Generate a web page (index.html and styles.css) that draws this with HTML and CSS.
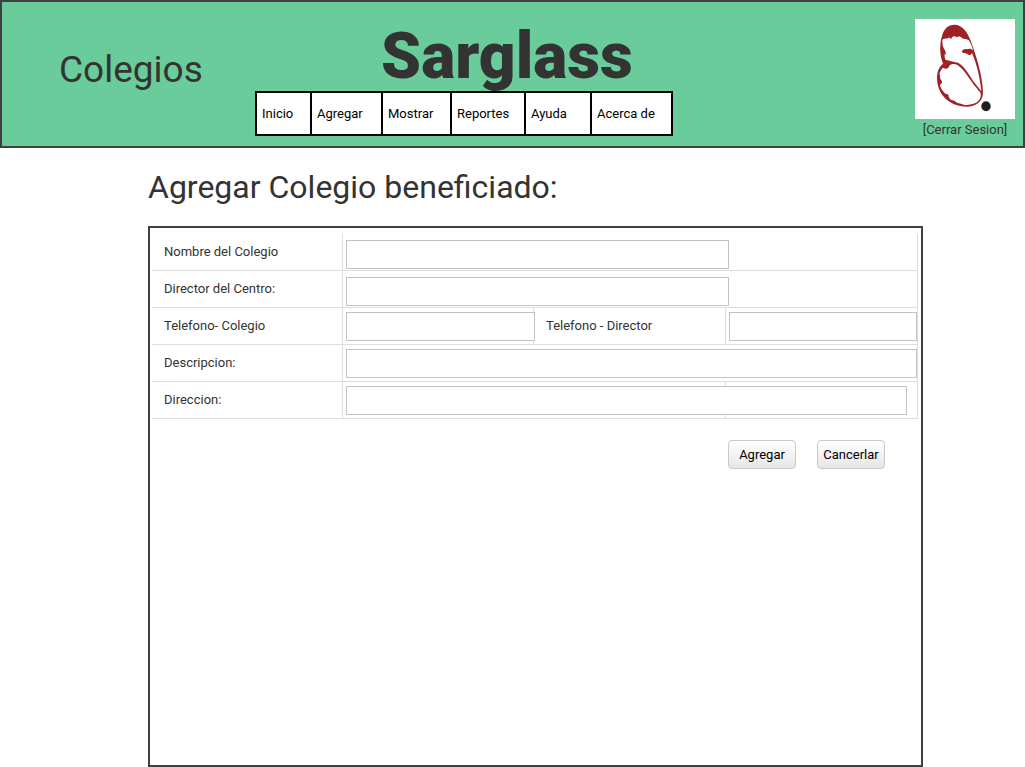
FILE: index.html
```
<!DOCTYPE html>
<html lang="es">
<head>
<meta charset="utf-8">
<meta name="viewport" content="width=device-width, initial-scale=1">
<title>Sarglass - Colegios</title>
<link rel="stylesheet" href="styles.css">
</head>
<body>
<header class="header">
  <h2 class="section-name">Colegios</h2>
  <div class="brand">
    <h1 class="brand-name">Sarglass</h1>
    <nav class="menu">
      <a class="menu-item" href="#">Inicio</a>
      <a class="menu-item" href="#">Agregar</a>
      <a class="menu-item" href="#">Mostrar</a>
      <a class="menu-item" href="#">Reportes</a>
      <a class="menu-item" href="#">Ayuda</a>
      <a class="menu-item" href="#">Acerca de</a>
    </nav>
  </div>
  <div class="session">
    <svg class="logo" viewBox="0 0 300 300" role="img" aria-label="Sarglass">
      <rect width="300" height="300" fill="#fff"/>
      <path fill="#9e2127" fill-rule="evenodd" d="M118 17C141 17 157 37 168 68C184 111 203 171 204 221C203 248 184 262 153 263C116 262 83 242 71 207C61 173 67 147 84 134C73 107 73 69 84 42C91 25 103 17 118 17Z
      M82 65C83 59 89 57 96 59C100 54 106 57 109 61C109 52 119 49 125 55C131 51 138 53 141 58C148 61 155 60 161 63C168 74 172 83 174 94C167 88 161 89 157 91C149 88 143 92 140 98C146 104 154 102 157 105C161 110 168 109 171 102C184 131 196 178 199 217L175 187C161 164 148 144 134 134C128 129 117 130 108 127C99 123 92 125 91 121C88 116 90 111 88 108C95 106 92 99 90 94C85 87 81 75 82 65Z
      M103 140C107 136 112 134 118 135C135 137 151 161 168 185C178 199 188 211 197 222C200 242 187 256 155 258C142 258 138 253 128 252C120 249 119 244 112 244C106 243 104 239 102 235C99 232 104 228 97 226C91 225 88 221 84 216C79 209 75 203 75 197C81 195 83 189 79 184C73 178 77 168 73 164C76 155 80 148 85 146C91 151 101 150 103 140Z"/>
      <ellipse cx="213" cy="262" rx="14" ry="15" fill="#231f20"/>
    </svg>
    <a class="logout" href="#">[Cerrar Sesion]</a>
  </div>
</header>
<main class="main">
  <h2 class="page-title">Agregar Colegio beneficiado:</h2>
  <form class="panel">
    <div class="fields">
      <label class="cell" for="nombre">Nombre del Colegio</label>
      <div class="cell control upper wide"><input class="input two-thirds" id="nombre" type="text"></div>

      <label class="cell" for="director">Director del Centro:</label>
      <div class="cell control upper wide"><input class="input two-thirds" id="director" type="text"></div>

      <label class="cell" for="tel-colegio">Telefono- Colegio</label>
      <div class="cell control"><input class="input overlap" id="tel-colegio" type="text"></div>
      <label class="cell" for="tel-director">Telefono - Director</label>
      <div class="cell control"><input class="input" id="tel-director" type="text"></div>

      <label class="cell" for="descripcion">Descripcion:</label>
      <div class="cell control wide"><input class="input" id="descripcion" type="text"></div>

      <label class="cell" for="direccion">Direccion:</label>
      <div class="cell control double"><input class="input address" id="direccion" type="text"></div>
      <div class="cell"></div>
    </div>
    <div class="actions">
      <button class="button" type="submit">Agregar</button>
      <button class="button" type="button">Cancerlar</button>
    </div>
  </form>
</main>
</body>
</html>
```
FILE: styles.css
```
* { box-sizing: border-box; }

body {
  margin: 0;
  min-height: 100vh;
  display: flex;
  flex-direction: column;
  background: #fff;
  color: #333;
  font: 13px/20px Roboto, sans-serif;
}

h1, h2 { margin: 0; }

.header {
  display: flex;
  align-items: flex-start;
  min-height: 148px;
  padding: 0 8px 0 57px;
  border: 2px solid #404040;
  background: #6acc9a;
}

.section-name {
  flex: 0 0 196px;
  padding-top: 44px;
  font-size: 37px;
  font-weight: 400;
  line-height: 48px;
}

.brand {
  display: flex;
  flex-direction: column;
}

.brand-name {
  padding: 23px 0 2px 86px;
  text-align: center;
  font-size: 64px;
  font-weight: 900;
  line-height: 64px;
}

.menu {
  display: grid;
  grid-template-columns: 55px 71px 69px 74px 66px 79px;
  position: relative;
  border: 2px solid #000;
  background: #fff;
}

.menu-item {
  padding: 10px 0 10px 5px;
  border-right: 2px solid #000;
  color: #000;
  line-height: 21px;
  text-decoration: none;
}

.menu-item:last-child { border-right: 0; }

.session {
  display: flex;
  flex-direction: column;
  align-items: center;
  margin-left: auto;
  padding-top: 17px;
}

.logo {
  display: block;
  width: 100px;
  height: 100px;
}

.logout {
  padding-top: 1px;
  color: #333;
  text-decoration: none;
}

.main {
  flex: 1;
  display: flex;
  flex-direction: column;
  margin: 0 102px 0 148px;
}

.page-title {
  padding: 19px 0;
  font-size: 32px;
  font-weight: 400;
  line-height: 40px;
}

.panel {
  flex: 1;
  padding: 6px 3px 20px 2px;
  border: 2px solid #404040;
}

.fields {
  display: grid;
  grid-template-columns: 191fr 191fr 192fr 192fr;
  grid-auto-rows: 37px;
}

.cell {
  min-width: 0;
  padding: 8px 12px;
  border-right: 1px solid #ddd;
  border-bottom: 1px solid #ddd;
}

.control { padding: 4px 0 0 3px; }
.upper { padding-top: 6px; }
.wide { grid-column: span 3; }
.double { grid-column: span 2; }

.input {
  display: block;
  position: relative;
  width: 100%;
  height: 29px;
  padding: 4px 6px;
  border: 1px solid #c3c3c3;
  background: #fff;
  color: #333;
  font: inherit;
}

.two-thirds { width: 67%; }
.overlap { width: 101%; }
.address { width: 148%; }

.actions {
  display: flex;
  justify-content: flex-end;
  gap: 21px;
  padding: 21px 33px 0 0;
}

.button {
  width: 68px;
  height: 29px;
  padding: 0;
  border: 1px solid #c8c8c8;
  border-radius: 4px;
  background: linear-gradient(#fff, #e6e6e6);
  color: #000;
  font: inherit;
}
```
